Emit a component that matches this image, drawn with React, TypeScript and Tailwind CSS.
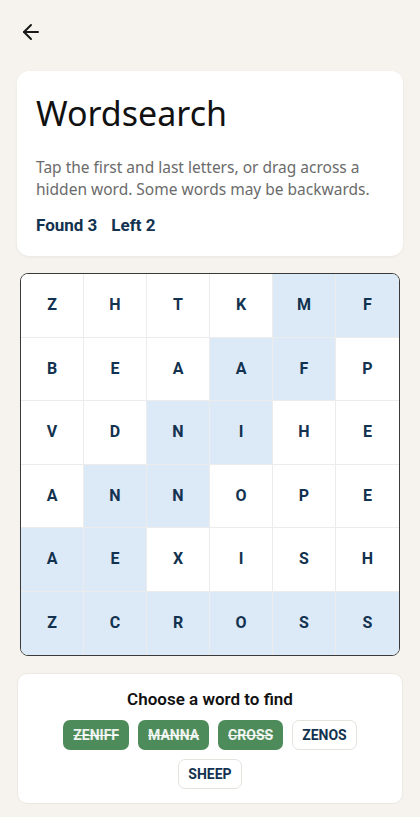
import { ArrowLeft } from "lucide-react";

const grid = ["ZHTKMF", "BEAAFP", "VDNIHE", "ANNOPE", "AEXISH", "ZCROSS"];

// cells that belong to found words, row -> columns
const marked: Record<number, number[]> = {
  0: [4, 5],
  1: [3, 4],
  2: [2, 3],
  3: [1, 2],
  4: [0, 1],
  5: [0, 1, 2, 3, 4, 5],
};

const words = [
  { text: "ZENIFF", found: true },
  { text: "MANNA", found: true },
  { text: "CROSS", found: true },
  { text: "ZENOS", found: false },
  { text: "SHEEP", found: false },
];

export default function App() {
  return (
    <div className="min-h-[817px] bg-[#f6f3ee] px-[17px] pb-[13px] font-['Roboto',sans-serif]">
      <div className="flex h-[63px] items-center pl-[2px]">
        <ArrowLeft className="h-[24px] w-[24px] text-[#1a1a1a]" strokeWidth={2} />
      </div>

      <div className="mt-[8px] rounded-[12px] bg-white px-[19px] pb-[20px] pt-[20px] shadow-[0_1px_3px_rgba(0,0,0,0.06)]">
        <h1 className="font-['Noto_Sans',sans-serif] text-[34px] leading-[44px] text-[#111]">
          Wordsearch
        </h1>
        <p className="mt-[21px] font-['Noto_Sans',sans-serif] text-[15.5px] leading-[22px] text-[#6b6b6b]">
          Tap the first and last letters, or drag across a hidden word. Some words may be backwards.
        </p>
        <div className="mt-[14px] flex gap-[14px] text-[17px] font-bold leading-[22px] text-[#12324f]">
          <span>Found 3</span>
          <span>Left 2</span>
        </div>
      </div>

      <div className="mx-[3px] mt-[17px] overflow-hidden rounded-[8px] border border-[#3a3a3a] bg-white">
        <div className="grid grid-cols-6">
          {grid.map((row, r) =>
            row.split("").map((ch, c) => {
              const hit = marked[r].includes(c);
              return (
                <div
                  key={`${r}-${c}`}
                  className={
                    "flex h-[63.5px] items-center justify-center border-[#ececec] text-[16px] font-bold text-[#12324f] " +
                    (c < 5 ? "border-r " : "") +
                    (r < 5 ? "border-b " : "") +
                    (hit ? "bg-[#dce9f7]" : "bg-white")
                  }
                >
                  {ch}
                </div>
              );
            })
          )}
        </div>
      </div>

      <div className="mt-[17px] rounded-[10px] border border-[#ece9e3] bg-white px-[16px] pb-[14px] pt-[13px]">
        <h2 className="text-center text-[17px] font-semibold leading-[24px] text-[#111]">
          Choose a word to find
        </h2>
        <div className="mt-[9px] flex flex-wrap justify-center gap-x-[9px] gap-y-[9px]">
          {words.map((w) =>
            w.found ? (
              <span
                key={w.text}
                className="flex h-[30px] items-center rounded-[7px] bg-[#4e8b5b] px-[10px] text-[14px] font-bold text-white/90 line-through"
              >
                {w.text}
              </span>
            ) : (
              <span
                key={w.text}
                className="flex h-[30px] items-center rounded-[7px] border border-[#e6e3de] bg-white px-[9px] text-[14px] font-bold text-[#12324f]"
              >
                {w.text}
              </span>
            )
          )}
        </div>
      </div>
    </div>
  );
}
